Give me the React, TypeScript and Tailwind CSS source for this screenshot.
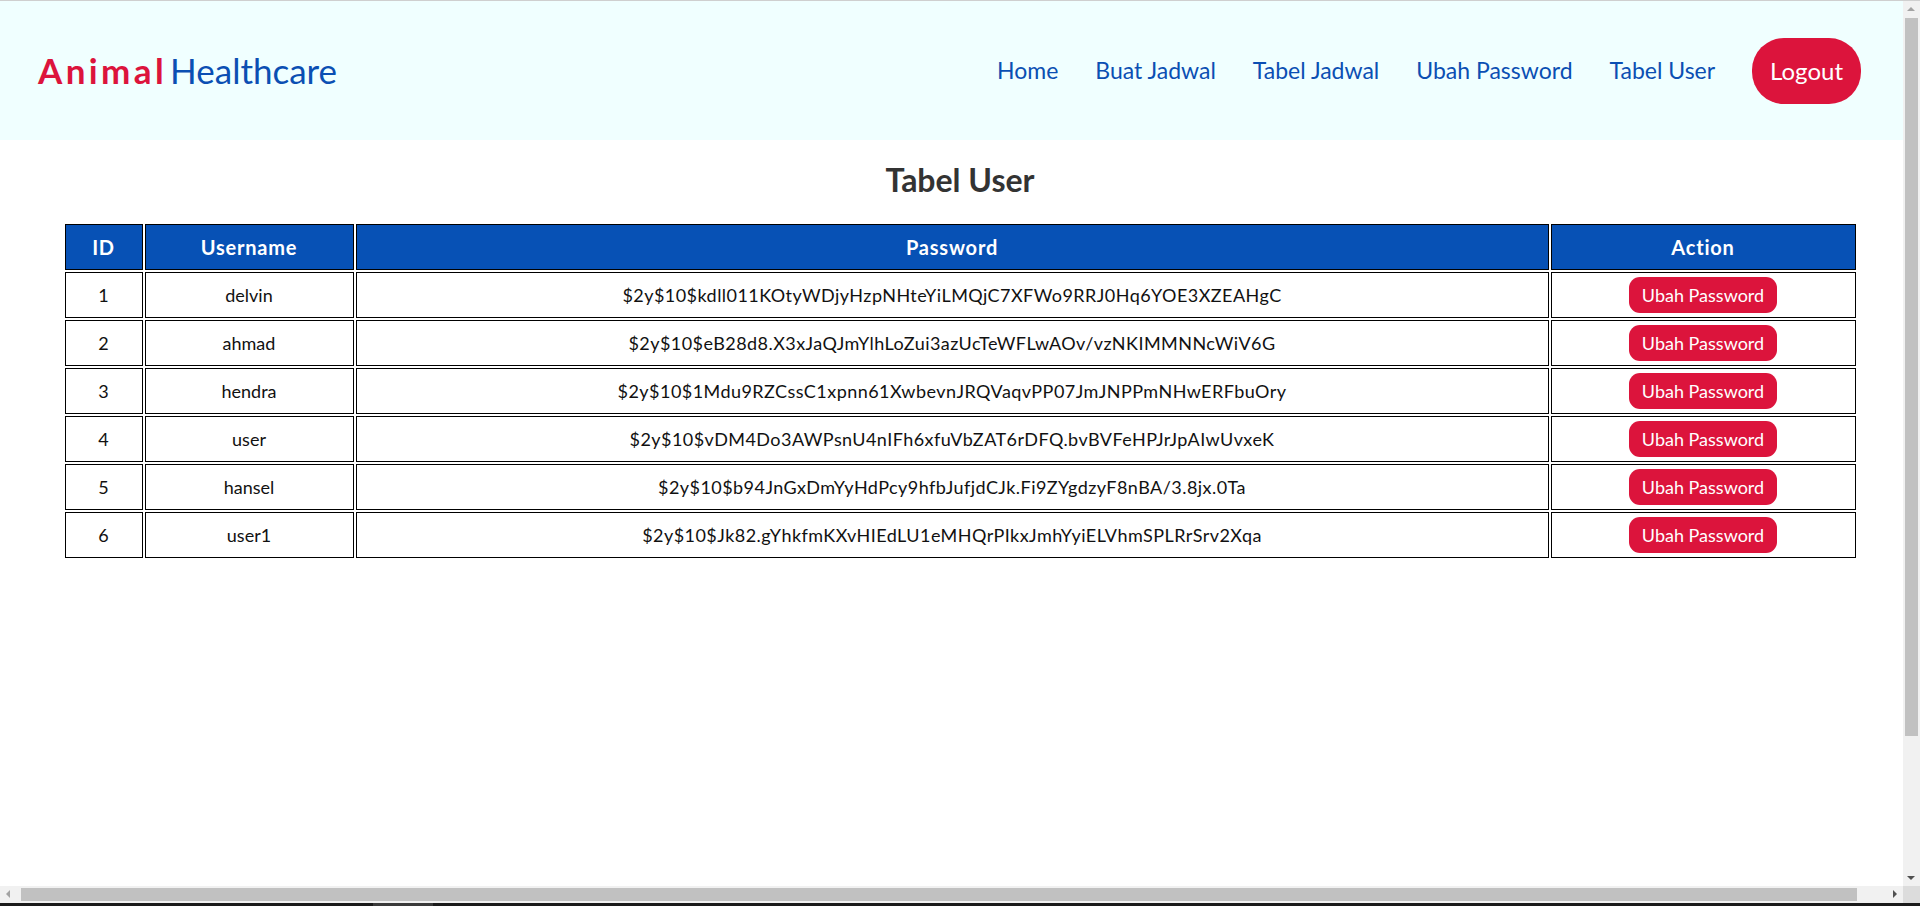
import React from 'react';

interface UserRow {
  id: number;
  username: string;
  password: string;
}

const USERS: UserRow[] = [
  { id: 1, username: 'delvin', password: '$2y$10$kdll011KOtyWDjyHzpNHteYiLMQjC7XFWo9RRJ0Hq6YOE3XZEAHgC' },
  { id: 2, username: 'ahmad', password: '$2y$10$eB28d8.X3xJaQJmYlhLoZui3azUcTeWFLwAOv/vzNKIMMNNcWiV6G' },
  { id: 3, username: 'hendra', password: '$2y$10$1Mdu9RZCssC1xpnn61XwbevnJRQVaqvPP07JmJNPPmNHwERFbuOry' },
  { id: 4, username: 'user', password: '$2y$10$vDM4Do3AWPsnU4nIFh6xfuVbZAT6rDFQ.bvBVFeHPJrJpAIwUvxeK' },
  { id: 5, username: 'hansel', password: '$2y$10$b94JnGxDmYyHdPcy9hfbJufjdCJk.Fi9ZYgdzyF8nBA/3.8jx.0Ta' },
  { id: 6, username: 'user1', password: '$2y$10$Jk82.gYhkfmKXvHIEdLU1eMHQrPIkxJmhYyiELVhmSPLRrSrv2Xqa' },
];

const NAV = ['Home', 'Buat Jadwal', 'Tabel Jadwal', 'Ubah Password', 'Tabel User'];

const Arrow: React.FC<{ dir: 'up' | 'down' | 'left' | 'right'; light?: boolean }> = ({ dir, light }) => {
  const pts = {
    up: '4,10 12,10 8,6',
    down: '4,7 12,7 8,11',
    left: '10,4 10,12 6,8',
    right: '7,4 7,12 11,8',
  }[dir];
  return (
    <svg width="17" height="17" viewBox="0 0 17 17">
      <polygon points={pts} fill={light ? '#a3a3a3' : '#505050'} />
    </svg>
  );
};

const Header: React.FC = () => (
  <header className="h-[139px] bg-[#f0ffff] flex items-center justify-between pl-[38px] pr-[42px]">
    <div className="text-[35px] leading-none flex gap-[3px]">
      <span className="font-bold text-[#dc143c] tracking-[3.4px]">Animal</span>
      <span className="text-[#0b4fb3]">Healthcare</span>
    </div>
    <nav className="flex items-center gap-[37px] text-[23px] text-[#0b4fb3]">
      {NAV.map((item) => (
        <a key={item} href="#" className="leading-none">
          {item}
        </a>
      ))}
      <button className="h-[66px] px-[18px] rounded-[32px] bg-[#dc143c] text-white text-[24px]">Logout</button>
    </nav>
  </header>
);

const UserTable: React.FC = () => (
  <section className="w-[1920px]">
    <h2 className="text-center text-[32px] leading-[40px] font-bold text-[#333333] mt-[20px] mb-[22px]">Tabel User</h2>
    <table className="mx-auto border-separate border-spacing-[2px] text-[18px] text-[#111111]">
      <colgroup>
        <col className="w-[78px]" />
        <col className="w-[209px]" />
        <col className="w-[1193px]" />
        <col className="w-[305px]" />
      </colgroup>
      <thead>
        <tr className="bg-[#0751b5] text-white font-bold text-[20px] tracking-[0.8px]">
          <th className="h-[46px] border border-black p-0">ID</th>
          <th className="h-[46px] border border-black p-0">Username</th>
          <th className="h-[46px] border border-black p-0">Password</th>
          <th className="h-[46px] border border-black p-0">Action</th>
        </tr>
      </thead>
      <tbody>
        {USERS.map((u) => (
          <tr key={u.id} className="text-center">
            <td className="h-[46px] border border-black p-0">{u.id}</td>
            <td className="h-[46px] border border-black p-0">{u.username}</td>
            <td className="h-[46px] border border-black p-0 tracking-[0.45px]">{u.password}</td>
            <td className="h-[46px] border border-black p-0">
              <button className="bg-[#dc143c] text-white rounded-[11px] px-[13px] h-[36px] leading-[36px] text-[18px]">
                Ubah Password
              </button>
            </td>
          </tr>
        ))}
      </tbody>
    </table>
  </section>
);

export default function App() {
  return (
    <div className="w-[1920px] h-[906px] flex flex-col overflow-hidden bg-white font-['Lato',sans-serif]">
      <div className="h-[1px] bg-[#cfcfcf]" />
      <div className="flex h-[885px]">
        <div className="w-[1903px] overflow-hidden flex flex-col">
          <Header />
          <UserTable />
        </div>
        <div className="w-[17px] bg-[#f1f1f1] flex flex-col">
          <Arrow dir="up" light />
          <div className="flex-1 px-[2px]">
            <div className="h-[718px] bg-[#c1c1c1]" />
          </div>
          <Arrow dir="down" />
        </div>
      </div>
      <div className="flex h-[17px]">
        <div className="w-[1903px] bg-[#f1f1f1] flex">
          <Arrow dir="left" light />
          <div className="flex-1 py-[2px]">
            <div className="h-full w-[1836px] ml-[4px] bg-[#c1c1c1]" />
          </div>
          <Arrow dir="right" />
        </div>
        <div className="w-[17px] bg-[#dcdcdc]" />
      </div>
      <div className="h-[3px] bg-[#1b1b1b] flex">
        <div className="ml-[373px] w-[60px] bg-[#3a3a3a]" />
      </div>
    </div>
  );
}
